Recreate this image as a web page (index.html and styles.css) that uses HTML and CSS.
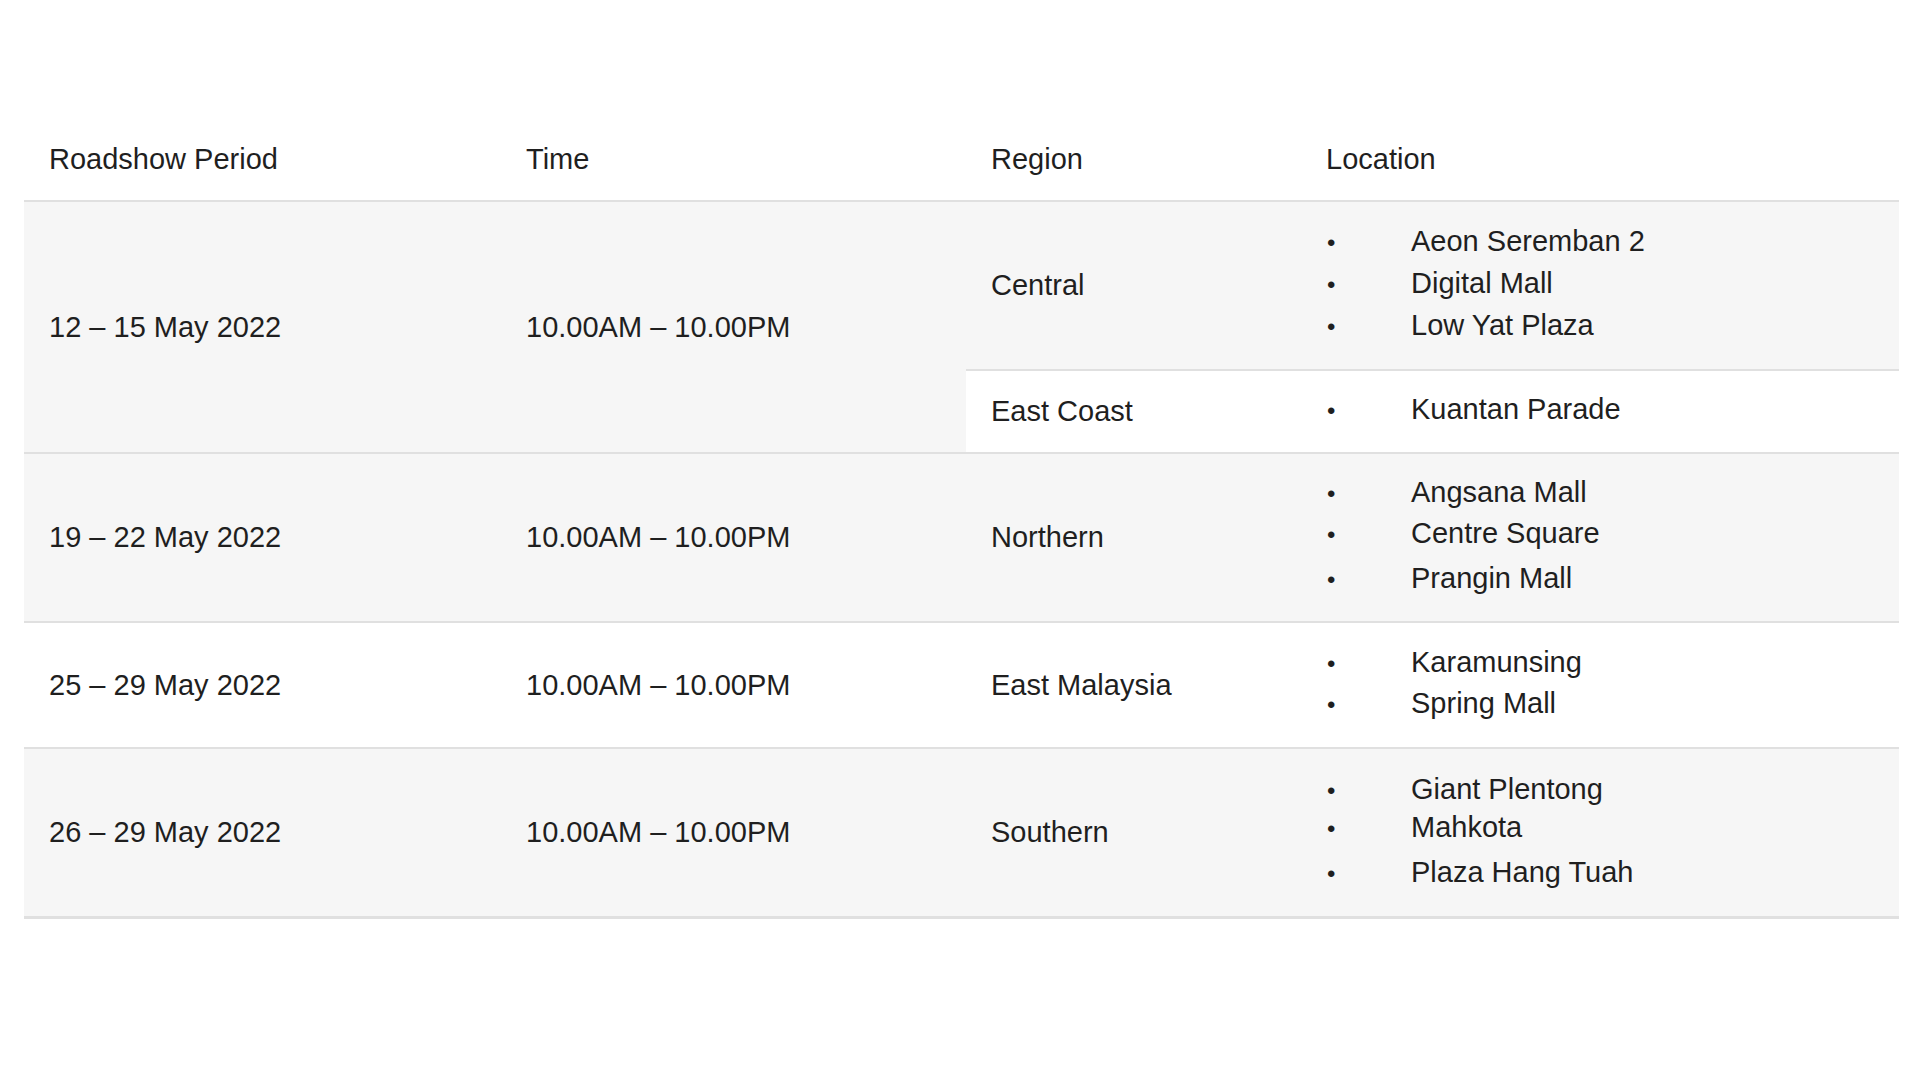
FILE: index.html
```html
<!DOCTYPE html>
<html lang="en">
<head>
<meta charset="utf-8">
<title>Roadshow Schedule</title>
<link rel="stylesheet" href="styles.css">
</head>
<body>
<main class="page">
  <table class="schedule">
    <colgroup>
      <col class="c-period">
      <col class="c-time">
      <col class="c-region">
      <col class="c-location">
    </colgroup>
    <thead>
      <tr>
        <th>Roadshow Period</th>
        <th>Time</th>
        <th>Region</th>
        <th>Location</th>
      </tr>
    </thead>
    <tbody>
      <tr class="r3">
        <td rowspan="2">12 – 15 May 2022</td>
        <td rowspan="2">10.00AM – 10.00PM</td>
        <td>Central</td>
        <td>
          <ul class="locs">
            <li><span class="dot">•</span><span>Aeon Seremban 2</span></li>
            <li><span class="dot">•</span><span>Digital Mall</span></li>
            <li><span class="dot">•</span><span>Low Yat Plaza</span></li>
          </ul>
        </td>
      </tr>
      <tr class="r1">
        <td>East Coast</td>
        <td>
          <ul class="locs">
            <li><span class="dot">•</span><span>Kuantan Parade</span></li>
          </ul>
        </td>
      </tr>
      <tr class="r3">
        <td>19 – 22 May 2022</td>
        <td>10.00AM – 10.00PM</td>
        <td>Northern</td>
        <td>
          <ul class="locs">
            <li><span class="dot">•</span><span>Angsana Mall</span></li>
            <li class="tight"><span class="dot">•</span><span>Centre Square</span></li>
            <li class="loose"><span class="dot">•</span><span>Prangin Mall</span></li>
          </ul>
        </td>
      </tr>
      <tr class="r2">
        <td>25 – 29 May 2022</td>
        <td>10.00AM – 10.00PM</td>
        <td>East Malaysia</td>
        <td>
          <ul class="locs">
            <li><span class="dot">•</span><span>Karamunsing</span></li>
            <li class="tight"><span class="dot">•</span><span>Spring Mall</span></li>
          </ul>
        </td>
      </tr>
      <tr class="r3 last">
        <td>26 – 29 May 2022</td>
        <td>10.00AM – 10.00PM</td>
        <td>Southern</td>
        <td>
          <ul class="locs">
            <li><span class="dot">•</span><span>Giant Plentong</span></li>
            <li class="tighter"><span class="dot">•</span><span>Mahkota</span></li>
            <li class="loose"><span class="dot">•</span><span>Plaza Hang Tuah</span></li>
          </ul>
        </td>
      </tr>
    </tbody>
  </table>
</main>
</body>
</html>
```

FILE: styles.css
```css
html, body {
  margin: 0;
  padding: 0;
  background: #ffffff;
}

body {
  font-family: "Liberation Sans", Arial, sans-serif;
  color: #1f1f1f;
  font-size: 29px;
}

.page {
  padding: 118px 21px 0 24px;
}

.schedule {
  width: 1875px;
  border-collapse: collapse;
  table-layout: fixed;
}

.c-period { width: 477px; }
.c-time { width: 465px; }
.c-region { width: 335px; }
.c-location { width: 598px; }

.schedule th,
.schedule td {
  padding: 0 25px;
  text-align: left;
  vertical-align: middle;
  font-weight: normal;
  line-height: 41px;
  border-bottom: 2px solid #e0e0e0;
}

.schedule th {
  height: 82px;
}

.schedule tbody tr:nth-child(odd) td {
  background: #f6f6f6;
}

.schedule tbody tr:nth-child(even) td {
  background: #ffffff;
}

.r1 td { height: 81px; }
.r2 td { height: 124px; }
.r3 td { height: 167px; }

.schedule tr.last td {
  border-bottom-width: 3px;
}

.locs {
  list-style: none;
  margin: -3px 0 0 0;
  padding: 0;
}

.locs li {
  display: flex;
  align-items: baseline;
}

.locs li.tight { margin-top: -1px; }
.locs li.tighter { margin-top: -4px; }
.locs li.loose { margin-top: 3px; }

.dot {
  flex: 0 0 84px;
  font-size: 24px;
  padding-left: 1px;
}
```
